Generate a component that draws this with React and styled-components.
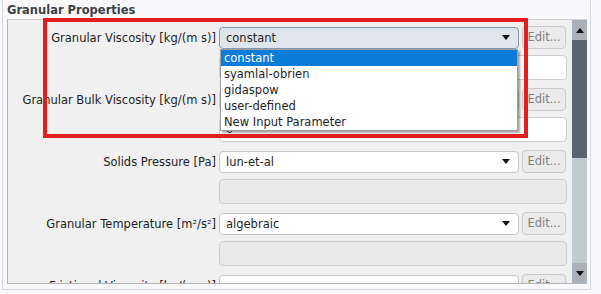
import React from "react";
import styled, { createGlobalStyle } from "styled-components";

const PROPERTIES = [
  { label: "Granular Viscosity [kg/(m s)]", value: "constant", open: true, field: "0", fieldOn: true },
  { label: "Granular Bulk Viscosity [kg/(m s)]", value: "constant", field: "0", fieldOn: true },
  { label: "Solids Pressure [Pa]", value: "lun-et-al" },
  { label: "Granular Temperature [m\u00b2/s\u00b2]", value: "algebraic" },
  { label: "Frictional Viscosity [kg/(m s)]", value: "" },
];

const OPTIONS = ["constant", "syamlal-obrien", "gidaspow", "user-defined", "New Input Parameter"];

const Arrow = ({ up }) => (
  <svg width="8" height="5" viewBox="0 0 8 5">
    <path d={up ? "M0 5 L4 0 L8 5 Z" : "M0 0 L8 0 L4 5 Z"} fill="#111" />
  </svg>
);

const App = () => {
  return (
    <Page>
      <GlobalStyle />
      <Frame>
        <Title>Granular Properties</Title>
        <Group>
          <Viewport>
            {PROPERTIES.map((prop, index) => (
              <Block key={index}>
                <Label>{prop.label}</Label>
                <ComboWrap>
                  <Combo open={prop.open}>
                    <span>{prop.value}</span>
                    <Arrow />
                  </Combo>
                  {prop.open && (
                    <Popup>
                      {OPTIONS.map((opt, i) => (
                        <Option key={i} selected={i === 0}>{opt}</Option>
                      ))}
                    </Popup>
                  )}
                </ComboWrap>
                <EditButton>Edit...</EditButton>
                <Field enabled={prop.fieldOn}>{prop.field}</Field>
              </Block>
            ))}
          </Viewport>
          <Scrollbar>
            <ScrollButton><Arrow up /></ScrollButton>
            <Thumb />
            <Track />
            <ScrollButton><Arrow /></ScrollButton>
          </Scrollbar>
        </Group>
      </Frame>
      <Highlight />
    </Page>
  );
};

const GlobalStyle = createGlobalStyle`
  body {
    margin: 0;
    background: #f9f9fb;
    font-family: "DejaVu Sans", Verdana, sans-serif;
  }
`;

const Page = styled.div`
  position: relative;
  width: 601px;
  height: 294px;
  overflow: hidden;
`;

const Frame = styled.div`
  margin-left: 2px;
  width: 583px;
  height: 289px;
  padding-left: 4px;
  border: 1px solid #d3d8e2;
  border-top: none;
`;

const Title = styled.div`
  height: 19px;
  line-height: 18px;
  padding-top: 1px;
  box-sizing: border-box;
  font-size: 11.5px;
  font-weight: bold;
  color: #3b3f47;
`;

const Group = styled.div`
  display: flex;
  width: 580px;
  height: 265px;
  box-sizing: border-box;
  background: #f0f0f0;
  border: 1px solid #b4b4b4;
  border-top-color: #d0d0d0;
  border-right: none;
`;

const Viewport = styled.div`
  flex: 1;
  overflow: hidden;
  padding-top: 6px;
`;

const Block = styled.div`
  display: grid;
  grid-template-columns: 208px 300px 44px;
  grid-template-rows: 23px 25px;
  column-gap: 3px;
  row-gap: 6px;
  margin-bottom: 8px;
  align-items: center;
`;

const Label = styled.div`
  justify-self: end;
  white-space: nowrap;
  font-size: 11.5px;
  color: #1e1e1e;
`;

const ComboWrap = styled.div`
  position: relative;
`;

const Combo = styled.div`
  display: flex;
  align-items: center;
  justify-content: space-between;
  height: 22px;
  box-sizing: border-box;
  padding: 0 8px 0 6px;
  border: 1px solid ${(p) => (p.open ? "#8796aa" : "#c6c6c6")};
  border-radius: 4px;
  background: ${(p) => (p.open ? "#dfe5ec" : "#ffffff")};
  font-size: 11.5px;
  color: #1e1e1e;
`;

const Popup = styled.div`
  position: absolute;
  left: 1px;
  top: 22px;
  width: 298px;
  height: 82px;
  box-sizing: border-box;
  background: #fff;
  border: 1px solid #a0a0a0;
  box-shadow: 2px 2px 2px rgba(0, 0, 0, 0.35);
  z-index: 2;
`;

const Option = styled.div`
  height: 16px;
  line-height: 16px;
  padding-left: 3px;
  font-size: 11.5px;
  color: ${(p) => (p.selected ? "#ffffff" : "#1e1e1e")};
  background: ${(p) => (p.selected ? "#0c7cd8" : "transparent")};
`;

const EditButton = styled.div`
  height: 23px;
  line-height: 21px;
  box-sizing: border-box;
  text-align: center;
  border: 1px solid #cacaca;
  border-radius: 4px;
  background: #ebebeb;
  font-size: 11.5px;
  color: #808080;
`;

const Field = styled.div`
  grid-column: 2 / 4;
  width: 348px;
  height: 25px;
  line-height: 23px;
  box-sizing: border-box;
  padding-left: 6px;
  border: 1px solid #cdcdcd;
  border-radius: 4px;
  background: ${(p) => (p.enabled ? "#ffffff" : "#eaeaea")};
  font-size: 11.5px;
  color: #1e1e1e;
`;

const Scrollbar = styled.div`
  display: flex;
  flex-direction: column;
  width: 15px;
`;

const ScrollButton = styled.div`
  display: flex;
  align-items: center;
  justify-content: center;
  height: 20px;
  background: #a8b1b9;
`;

const Thumb = styled.div`
  height: 118px;
  background: #5b6370;
`;

const Track = styled.div`
  flex: 1;
  background: #c2cad1;
`;

const Highlight = styled.div`
  position: absolute;
  left: 43px;
  top: 18px;
  width: 485px;
  height: 120px;
  box-sizing: border-box;
  border: 4px solid #e41e1e;
  pointer-events: none;
`;

export default App;
